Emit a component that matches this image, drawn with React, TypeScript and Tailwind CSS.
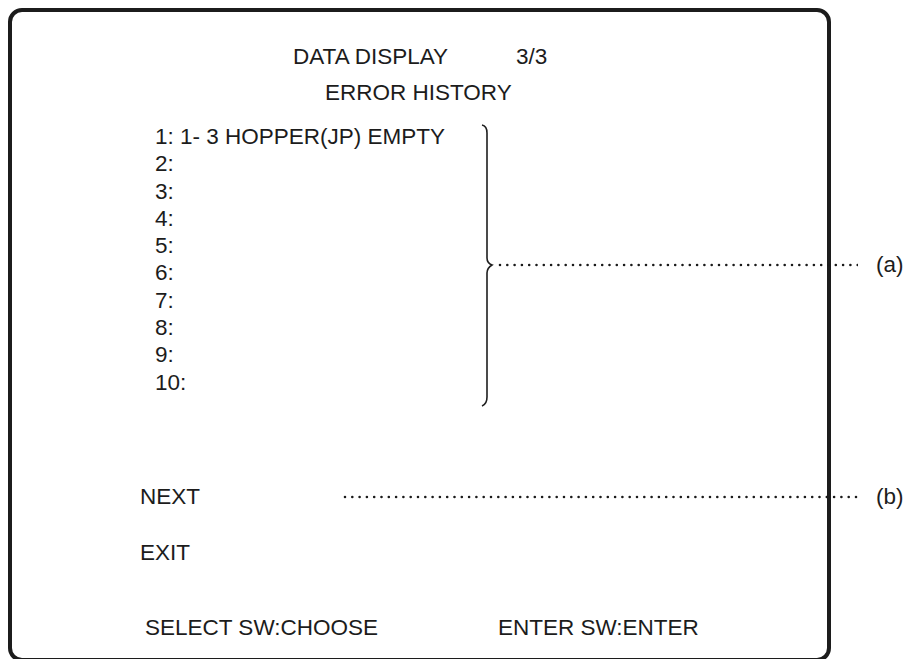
import React from 'react';

const rows = ['1: 1- 3 HOPPER(JP) EMPTY', '2:', '3:', '4:', '5:', '6:', '7:', '8:', '9:', '10:'];

// dotted leader line, round dots like the printed manual
function Dots({ width }: { width: number }) {
    return (
        <svg width={width} height="6" viewBox={`0 0 ${width} 6`}>
            <line x1="2" y1="3" x2={width} y2="3" stroke="#1a1a1a" strokeWidth="2.6" strokeLinecap="round" strokeDasharray="0 7.3" />
        </svg>
    );
}

export default function App() {
    return (
        <div className="relative w-[909px] h-[659px] overflow-hidden bg-white text-[#1c1c1c] font-['Liberation_Sans',Arial,sans-serif] text-[22.5px]">
            <div className="ml-[8px] mt-[8px] w-[823px] h-[654px] border-[4px] border-[#1c1c1c] rounded-[14px] flex flex-col">
                <div className="mt-[31px] flex leading-[28px]">
                    <span className="ml-[281px]">DATA DISPLAY</span>
                    <span className="ml-[68px]">3/3</span>
                </div>
                <div className="mt-[8px] ml-[313px] leading-[28px]">ERROR HISTORY</div>

                <div className="mt-[16px] ml-[143px] flex flex-col">
                    {rows.map((r) => (
                        <div key={r} className="leading-[27.3px] h-[27.3px] whitespace-pre">{r}</div>
                    ))}
                </div>

                <div className="mt-[87px] ml-[128px] leading-[28px]">NEXT</div>
                <div className="mt-[28px] ml-[128px] leading-[28px]">EXIT</div>

                <div className="mt-[47px] flex leading-[28px]">
                    <span className="ml-[133px]">SELECT SW:CHOOSE</span>
                    <span className="ml-[120px]">ENTER SW:ENTER</span>
                </div>
            </div>

            {/* annotation (a): brace over the list */}
            <svg className="absolute left-[478px] top-[121px]" width="20" height="290" viewBox="0 0 20 290">
                <path
                    d="M4 4 Q9 5 9 12 L9 137 Q9 142 14 144 Q9 147 9 152 L9 276 Q9 283 4 285"
                    fill="none"
                    stroke="#1f1f1f"
                    strokeWidth="1.6"
                />
            </svg>
            <div className="absolute left-[498px] top-[262px]">
                <Dots width={360} />
            </div>
            <div className="absolute left-[876px] top-[251px] leading-[28px]">(a)</div>

            {/* annotation (b): NEXT */}
            <div className="absolute left-[343px] top-[494px]">
                <Dots width={515} />
            </div>
            <div className="absolute left-[876px] top-[483px] leading-[28px]">(b)</div>
        </div>
    );
}
